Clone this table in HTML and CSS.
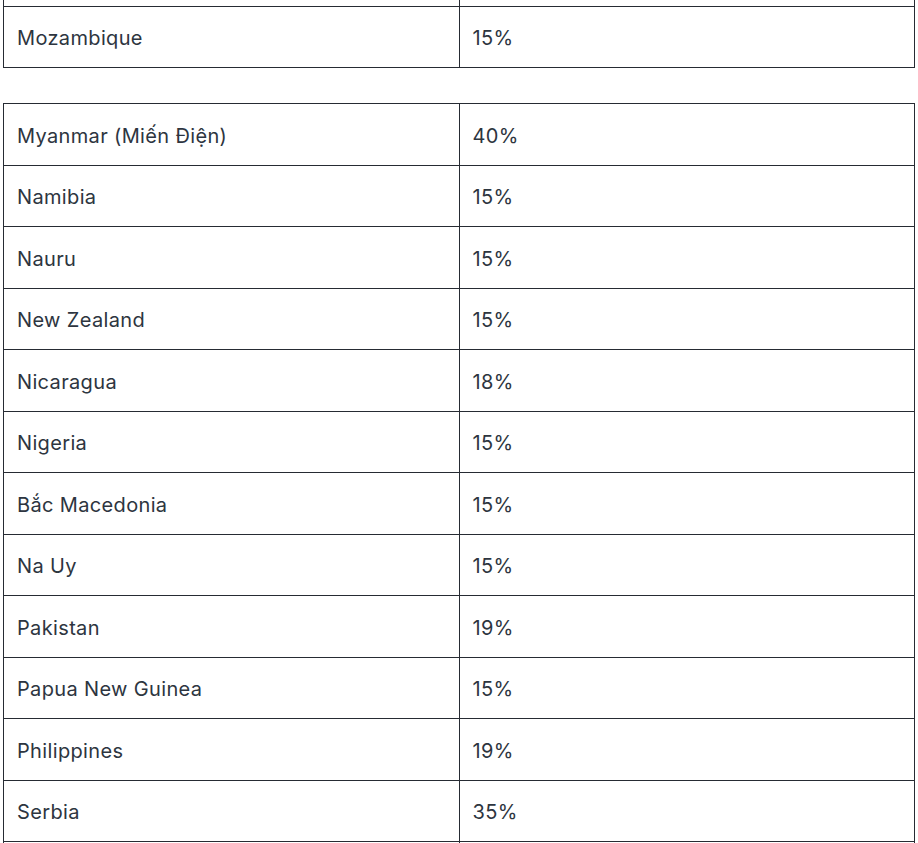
FILE: index.html
```html
<!DOCTYPE html>
<html lang="vi">
<head>
<meta charset="utf-8">
<link rel="stylesheet" href="styles.css">
</head>
<body>
<div class="page">
  <table class="rates first">
    <tbody>
      <tr class="edge"><td></td><td></td></tr>
      <tr><td>Mozambique</td><td>15%</td></tr>
    </tbody>
  </table>
  <table class="rates">
    <tbody>
      <tr><td>Myanmar (Miến Điện)</td><td>40%</td></tr>
      <tr><td>Namibia</td><td>15%</td></tr>
      <tr><td>Nauru</td><td>15%</td></tr>
      <tr><td>New Zealand</td><td>15%</td></tr>
      <tr><td>Nicaragua</td><td>18%</td></tr>
      <tr><td>Nigeria</td><td>15%</td></tr>
      <tr><td>Bắc Macedonia</td><td>15%</td></tr>
      <tr><td>Na Uy</td><td>15%</td></tr>
      <tr><td>Pakistan</td><td>19%</td></tr>
      <tr><td>Papua New Guinea</td><td>15%</td></tr>
      <tr><td>Philippines</td><td>19%</td></tr>
      <tr><td>Serbia</td><td>35%</td></tr>
      <tr class="edge"><td></td><td></td></tr>
    </tbody>
  </table>
</div>
</body>
</html>
```
FILE: styles.css
```css
html, body {
  margin: 0;
  padding: 0;
  background: #ffffff;
  overflow: hidden;
  height: 843px;
}
.page {
  padding: 0 3px;
  margin-top: -56px;
  font-family: Inter, "Noto Sans", sans-serif;
  color: #2d3540;
}
.rates {
  width: 912px;
  border-collapse: collapse;
  table-layout: fixed;
  font-size: 20px;
  letter-spacing: 0.35px;
}
.rates.first {
  margin-bottom: 35px;
}
.rates td {
  border: 1px solid #262b33;
  padding: 18.76px 13px 15.76px;
  line-height: 26px;
  width: 50%;
  vertical-align: middle;
}
.rates tr.edge td {
  height: 26px;
}
```
